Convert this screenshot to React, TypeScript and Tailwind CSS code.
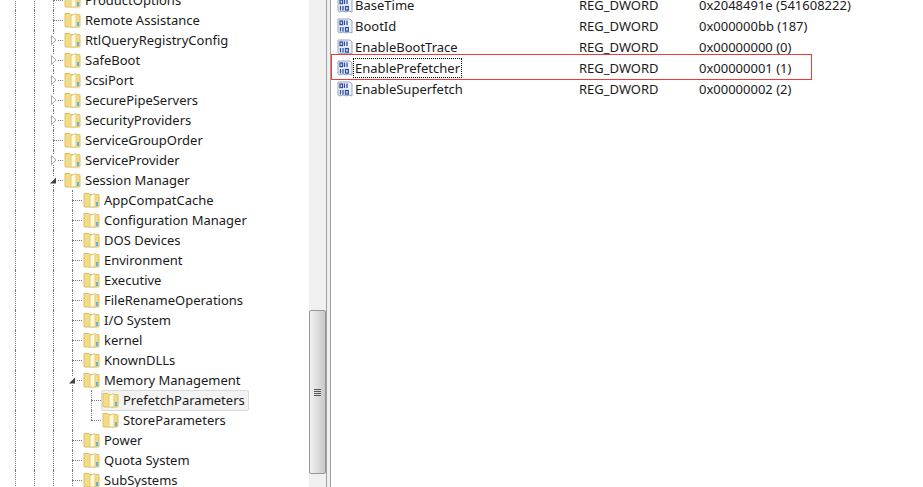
const F = "font-['Noto_Sans','DejaVu_Sans',sans-serif]";

function Folder() {
  return (
    <svg width="17" height="16" viewBox="0 0 17 16" className="shrink-0">
      <path d="M1 1.5h5l1 1h8.5l.5 1V14l-.5 1H1.5L1 14z" fill="#f4dc86" stroke="#d9be62" strokeWidth="1" />
      <path d="M7 3.5L12 1.5V15H7z" fill="#fffbe0" stroke="#e3cb7a" strokeWidth="1" />
      <rect x="13" y="10" width="2" height="4" fill="#5fb4dc" />
    </svg>
  );
}

function RegIcon() {
  return (
    <svg width="16" height="16" viewBox="0 0 16 16" className="shrink-0">
      <path d="M1 1h12l2 2v12l-3-1-3 1-3-1-3 1-2-1z" fill="#eef2fa" stroke="#9aa6bc" strokeWidth="1" />
      <g fill="none" stroke="#2b4fa8" strokeWidth="1.3">
        <rect x="3" y="3" width="2.5" height="3.6" />
        <path d="M7.5 2.5v4.5" />
        <path d="M10 2.5v4.5" />
        <path d="M3.5 9v4.5" />
        <path d="M6 9v4.5" />
        <rect x="8.5" y="9.5" width="2.8" height="3.6" />
      </g>
    </svg>
  );
}

function Arrow({ open }: { open: boolean }) {
  return open ? (
    <svg width="7" height="7" viewBox="0 0 7 7" className="absolute left-[-3px] top-[7px] bg-white">
      <path d="M6 0.5V6.5H0z" fill="#404040" />
    </svg>
  ) : (
    <svg width="6" height="10" viewBox="0 0 6 10" className="absolute left-[-2px] top-[5px] bg-white">
      <path d="M.5.5L5 5 .5 9.5z" fill="#fff" stroke="#a6a6a6" />
    </svg>
  );
}

type Row = { label: string; guides: number[]; exp?: "open" | "closed"; last?: boolean; sel?: boolean };

const base = [15, 34, 53];
const inner = [15, 34];
const kids = [15, 34, 72];
const rows: Row[] = [
  { label: "ProductOptions", guides: base },
  { label: "Remote Assistance", guides: base },
  { label: "RtlQueryRegistryConfig", guides: base, exp: "closed" },
  { label: "SafeBoot", guides: base, exp: "closed" },
  { label: "ScsiPort", guides: base, exp: "closed" },
  { label: "SecurePipeServers", guides: base, exp: "closed" },
  { label: "SecurityProviders", guides: base, exp: "closed" },
  { label: "ServiceGroupOrder", guides: base },
  { label: "ServiceProvider", guides: base, exp: "closed" },
  { label: "Session Manager", guides: base, exp: "open" },
];
const children = [
  "AppCompatCache",
  "Configuration Manager",
  "DOS Devices",
  "Environment",
  "Executive",
  "FileRenameOperations",
  "I/O System",
  "kernel",
  "KnownDLLs",
];
const after = ["Power", "Quota System", "SubSystems"];

function Guide({ last, connector, exp }: { last?: boolean; connector?: boolean; exp?: "open" | "closed" }) {
  return (
    <div className="relative h-full w-[19px] shrink-0">
      <div className={`absolute left-0 top-0 border-l border-dotted border-[#7a7a7a] ${last ? "h-[10px]" : "h-full"}`} />
      {connector && <div className="absolute left-0 top-[10px] w-[10px] border-t border-dotted border-[#7a7a7a]" />}
      {exp && <Arrow open={exp === "open"} />}
    </div>
  );
}

function TreeRow({ label, depth, exp, last, sel, extra }: { label: string; depth: number; exp?: "open" | "closed"; last?: boolean; sel?: boolean; extra?: boolean }) {
  const guides = [];
  for (let i = 0; i < depth; i++) guides.push(<Guide key={i} />);
  return (
    <div className="flex h-5 items-center">
      <div className="w-[15px] shrink-0" />
      {guides}
      <Guide connector last={last} exp={exp} />
      <div className="-ml-[9px] flex items-center">
        <div className={`flex h-[21px] items-center gap-[3px] rounded-[2px] pr-[3px] ${sel ? "border border-[#d9d9d9] bg-[#f3f3f3]" : "border border-transparent"}`}>
          <Folder />
          <span className="pl-px">{label}</span>
        </div>
      </div>
    </div>
  );
}

function Spacer({ width }: { width: number }) {
  return null;
}

const values = [
  ["BaseTime", "0x2048491e (541608222)"],
  ["BootId", "0x000000bb (187)"],
  ["EnableBootTrace", "0x00000000 (0)"],
  ["EnablePrefetcher", "0x00000001 (1)"],
  ["EnableSuperfetch", "0x00000002 (2)"],
];

export default function App() {
  return (
    <div className={`flex h-[487px] w-[923px] overflow-hidden bg-white text-[13px] leading-5 text-[#1a1a1a] ${F}`}>
      <div className="w-[309px] shrink-0 overflow-hidden">
        <div className="-mt-[10px]">
          {rows.map((r) => (
            <TreeRow key={r.label} label={r.label} depth={2} exp={r.exp} />
          ))}
          {children.map((c) => (
            <TreeRow key={c} label={c} depth={3} />
          ))}
          <TreeRow label="Memory Management" depth={3} exp="open" />
          <TreeRow label="PrefetchParameters" depth={4} sel />
          <TreeRow label="StoreParameters" depth={4} last />
          {after.map((c) => (
            <TreeRow key={c} label={c} depth={3} />
          ))}
        </div>
      </div>
      <div className="flex w-[17px] shrink-0 flex-col bg-[#f0f0f0] pt-[310px]">
        <div className="flex h-[164px] items-center justify-center rounded-[2px] border border-[#979797] bg-gradient-to-r from-[#f0f0f0] via-[#dedede] to-[#c8c8c8]">
          <div className="flex w-[7px] flex-col gap-px">
            <div className="h-px bg-[#555]" />
            <div className="h-px bg-[#555]" />
            <div className="h-px bg-[#555]" />
            <div className="h-px bg-[#555]" />
          </div>
        </div>
      </div>
      <div className="w-[5px] shrink-0 border-x border-[#a0a0a0] bg-[#f0f0f0]" />
      <div className="relative flex-1 pl-[6px]">
        <div className="-mt-[6px]">
          {values.map(([n, v], i) => (
            <div key={n} className="flex h-[21px] items-center">
              <RegIcon />
              <div className="ml-px w-[225px] shrink-0">
                <span className={`px-px ${i === 3 ? "outline outline-1 outline-dotted outline-black" : ""}`}>{n}</span>
              </div>
              <div className="w-[120px] shrink-0">REG_DWORD</div>
              <div>{v}</div>
            </div>
          ))}
        </div>
        <div className="absolute left-0 top-[54px] h-[26px] w-[481px] border border-[#f03a3a]" />
      </div>
    </div>
  );
}
